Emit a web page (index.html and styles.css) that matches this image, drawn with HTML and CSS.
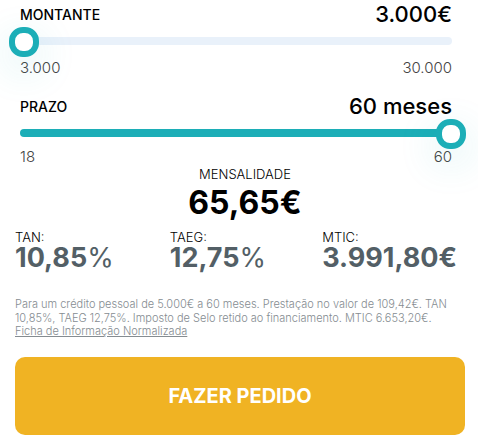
FILE: index.html
```html
<!doctype html>
<html lang="pt">
    <head>
        <meta charset="UTF-8" />
        <meta name="viewport" content="width=device-width, initial-scale=1.0" />
        <title>Simulador de crédito</title>
        <link rel="stylesheet" href="styles.css">
    </head>
    <body>
        <form class="simulator">
            <div class="field">
                <div class="field-head">
                    <label for="amount">MONTANTE</label>
                    <output class="field-value" for="amount">3.000€</output>
                </div>
                <div class="track">
                    <input type="range" id="amount" min="3000" max="30000" step="500" value="3000" />
                </div>
                <div class="limits">
                    <span>3.000</span>
                    <span>30.000</span>
                </div>
            </div>

            <div class="field">
                <div class="field-head">
                    <label for="term">PRAZO</label>
                    <output class="field-value" for="term">60 meses</output>
                </div>
                <div class="track track-full">
                    <input type="range" id="term" min="18" max="60" value="60" />
                </div>
                <div class="limits">
                    <span>18</span>
                    <span>60</span>
                </div>
            </div>

            <div class="monthly">
                <div class="monthly-label">MENSALIDADE</div>
                <div class="monthly-value">65,65€</div>
            </div>

            <div class="rates">
                <div class="rate">
                    <div class="rate-label">TAN:</div>
                    <div class="rate-value">10,85<span class="percent">%</span></div>
                </div>
                <div class="rate">
                    <div class="rate-label">TAEG:</div>
                    <div class="rate-value">12,75<span class="percent">%</span></div>
                </div>
                <div class="rate">
                    <div class="rate-label">MTIC:</div>
                    <div class="rate-value">3.991,80€</div>
                </div>
            </div>

            <div class="legal">
                <p>Para um crédito pessoal de 5.000€ a 60 meses. Prestação no valor de 109,42€. TAN 10,85%, TAEG 12,75%. Imposto de Selo retido ao financiamento. MTIC 6.653,20€.</p>
                <a href="#">Ficha de Informação Normalizada</a>
            </div>

            <button type="submit" class="submit">FAZER PEDIDO</button>
        </form>
    </body>
</html>
```

FILE: styles.css
```css
* {
    box-sizing: border-box;
}

body {
    margin: 0;
    font-family: Inter, sans-serif;
    background-color: #fff;
    color: #000;
    overflow-x: hidden;
}

.simulator {
    padding: 0 13px 13px 15px;
}

.field {
    padding: 0 13px 0 5px;
}

.field + .field {
    margin-top: 15px;
}

.field-head {
    display: flex;
    justify-content: space-between;
    align-items: center;
    height: 28px;
    margin-bottom: 9px;
}

.field-head label {
    font-size: 14px;
    font-weight: 500;
}

.field-value {
    font-size: 22px;
    font-weight: 500;
}

/* slider */
.track {
    height: 8px;
    border-radius: 4px;
    background-color: #e9f1fa;
}

.track-full {
    background-color: #1caeb7;
}

.track input {
    -webkit-appearance: none;
    appearance: none;
    display: block;
    width: calc(100% + 25px);
    height: 30px;
    margin: 0 -11px;
    background: transparent;
    transform: translateY(-10px);
    cursor: pointer;
}

.track input::-webkit-slider-thumb {
    -webkit-appearance: none;
    width: 30px;
    height: 30px;
    border: 6px solid #1caeb7;
    border-radius: 14px;
    background-color: #fff;
    box-shadow: 0 12px 40px rgba(28, 174, 183, 0.2);
}

.limits {
    display: flex;
    justify-content: space-between;
    margin-top: 14px;
    font-size: 15px;
    font-weight: 300;
    line-height: 18px;
    color: #444;
}

.track-full + .limits {
    margin-top: 11px;
}

.monthly {
    padding-left: 10px;
    text-align: center;
}

.monthly-label {
    font-size: 13px;
    font-weight: 300;
    line-height: 16px;
}

.monthly-value {
    font-size: 32px;
    font-weight: 700;
    line-height: 42px;
}

.rates {
    display: flex;
    justify-content: space-between;
    padding-right: 8px;
    margin-top: 5px;
}

.rate-label {
    font-size: 13px;
    font-weight: 300;
    line-height: 16px;
}

.rate-value {
    font-size: 27px;
    font-weight: 700;
    line-height: 26px;
    color: #535f66;
}

.percent {
    font-weight: 400;
}

.legal {
    margin-top: 26px;
    font-size: 11px;
    font-weight: 300;
    line-height: 14px;
    color: #858c91;
}

.legal p {
    margin: 0;
}

.legal a {
    display: block;
    line-height: 12px;
    color: inherit;
}

.submit {
    display: block;
    width: 100%;
    height: 78px;
    margin-top: 20px;
    border: 0;
    border-radius: 10px;
    background-color: #f0b323;
    color: #fff;
    font-family: inherit;
    font-size: 20px;
    font-weight: 700;
    cursor: pointer;
}
```
